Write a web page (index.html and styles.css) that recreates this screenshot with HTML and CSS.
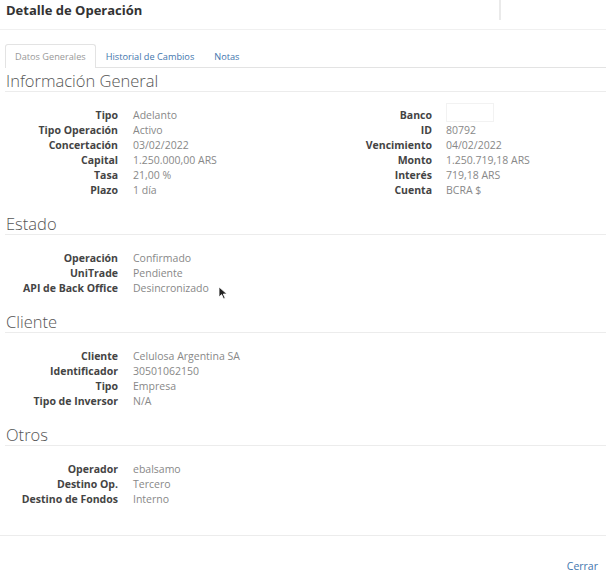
FILE: index.html
```html
<!DOCTYPE html>
<html lang="es">
<head>
  <meta charset="UTF-8" />
  <meta name="viewport" content="width=device-width, initial-scale=1.0" />
  <title>Detalle de Operación</title>
  <link rel="stylesheet" href="styles.css">
</head>
<body>

  <header class="modal-header">
    <h1>Detalle de Operación</h1>
    <div class="header-divisor"></div>
  </header>

  <main class="modal-body">
    <nav class="tabs">
      <a href="#" class="tab activo">Datos Generales</a>
      <a href="#" class="tab">Historial de Cambios</a>
      <a href="#" class="tab">Notas</a>
    </nav>

    <section class="bloque">
      <h2>Información General</h2>
      <div class="dos-columnas">
        <dl class="datos">
          <dt>Tipo</dt><dd>Adelanto</dd>
          <dt>Tipo Operación</dt><dd>Activo</dd>
          <dt>Concertación</dt><dd>03/02/2022</dd>
          <dt>Capital</dt><dd>1.250.000,00 ARS</dd>
          <dt>Tasa</dt><dd>21,00 %</dd>
          <dt>Plazo</dt><dd>1 día</dd>
        </dl>
        <dl class="datos derecha">
          <dt>Banco</dt><dd><span class="logo-banco"></span></dd>
          <dt>ID</dt><dd>80792</dd>
          <dt>Vencimiento</dt><dd>04/02/2022</dd>
          <dt>Monto</dt><dd>1.250.719,18 ARS</dd>
          <dt>Interés</dt><dd>719,18 ARS</dd>
          <dt>Cuenta</dt><dd>BCRA $</dd>
        </dl>
      </div>
    </section>

    <section class="bloque">
      <h2>Estado</h2>
      <dl class="datos">
        <dt>Operación</dt><dd>Confirmado</dd>
        <dt>UniTrade</dt><dd>Pendiente</dd>
        <dt>API de Back Office</dt><dd class="con-cursor">Desincronizado
          <svg class="cursor" width="11" height="14" viewBox="0 0 11 14">
            <path d="M1 1 L1 11 L3.6 8.6 L5.6 13 L7.2 12.3 L5.3 8 L9 8 Z" fill="#222" stroke="#fff" stroke-width="0.8"/>
          </svg>
        </dd>
      </dl>
    </section>

    <section class="bloque">
      <h2>Cliente</h2>
      <dl class="datos">
        <dt>Cliente</dt><dd>Celulosa Argentina SA</dd>
        <dt>Identificador</dt><dd>30501062150</dd>
        <dt>Tipo</dt><dd>Empresa</dd>
        <dt>Tipo de Inversor</dt><dd>N/A</dd>
      </dl>
    </section>

    <section class="bloque">
      <h2>Otros</h2>
      <dl class="datos">
        <dt>Operador</dt><dd>ebalsamo</dd>
        <dt>Destino Op.</dt><dd>Tercero</dd>
        <dt>Destino de Fondos</dt><dd>Interno</dd>
      </dl>
    </section>
  </main>

  <footer class="modal-footer">
    <a href="#">Cerrar</a>
  </footer>

</body>
</html>
```

FILE: styles.css
```css
body {
  font-family: "Open Sans", "Liberation Sans", sans-serif;
  margin: 0;
  background-color: #fff;
  color: #555;
}

/* Cabecera */
.modal-header {
  display: flex;
  align-items: flex-start;
  height: 30px;
  border-bottom: 1px solid #f0f0f0;
  box-sizing: border-box;
}

.modal-header h1 {
  margin: 0;
  padding: 1px 0 0 6px;
  font-size: 13px;
  line-height: 18px;
  font-weight: bold;
  color: #333;
}

.header-divisor {
  margin-left: auto;
  width: 105px;
  height: 20px;
  border-left: 2px solid #eaeaea;
}

/* Cuerpo */
.modal-body {
  padding: 14px 0 0 5px;
}

.tabs {
  display: flex;
  border-bottom: 1px solid #e3e3e3;
  height: 23px;
}

.tab {
  display: block;
  padding: 0 9px;
  line-height: 23px;
  font-size: 9.2px;
  color: #3f75ad;
  text-decoration: none;
  border: 1px solid transparent;
  border-bottom: none;
  margin-bottom: -1px;
  height: 24px;
  box-sizing: border-box;
}

.tab.activo {
  color: #999;
  background-color: #fff;
  border-color: #e3e3e3;
  border-radius: 3px 3px 0 0;
}

.bloque h2 {
  margin: 16px 0 0;
  padding-left: 1px;
  font-size: 16.5px;
  font-weight: 300;
  line-height: 20px;
  color: #555;
  border-bottom: 1px solid #ececec;
}

.bloque:first-of-type h2 {
  margin-top: 3px;
}

.dos-columnas {
  display: flex;
}

.dos-columnas .datos {
  width: 298px;
}

.datos {
  display: grid;
  grid-template-columns: 113px auto;
  column-gap: 15px;
  margin: 16px 0 0;
  font-size: 10.5px;
  line-height: 15px;
  align-content: start;
}

.datos.derecha {
  grid-template-columns: 129px auto;
  column-gap: 14px;
}

.datos dt {
  text-align: right;
  font-weight: bold;
  color: #444;
}

.datos dd {
  margin: 0;
  color: #888;
}

.logo-banco {
  display: inline-block;
  width: 48px;
  height: 19px;
  margin: -5px 0 -4px;
  vertical-align: top;
  border: 1px solid #f2f2f2;
  box-sizing: border-box;
}

.con-cursor {
  position: relative;
}

.cursor {
  position: absolute;
  left: 85px;
  top: 5px;
}

/* Pie */
.modal-footer {
  margin-top: 28px;
  border-top: 1px solid #ececec;
  padding: 17px 8px 0 0;
  text-align: right;
}

.modal-footer a {
  font-size: 10.5px;
  color: #3f75ad;
  text-decoration: none;
}
```
